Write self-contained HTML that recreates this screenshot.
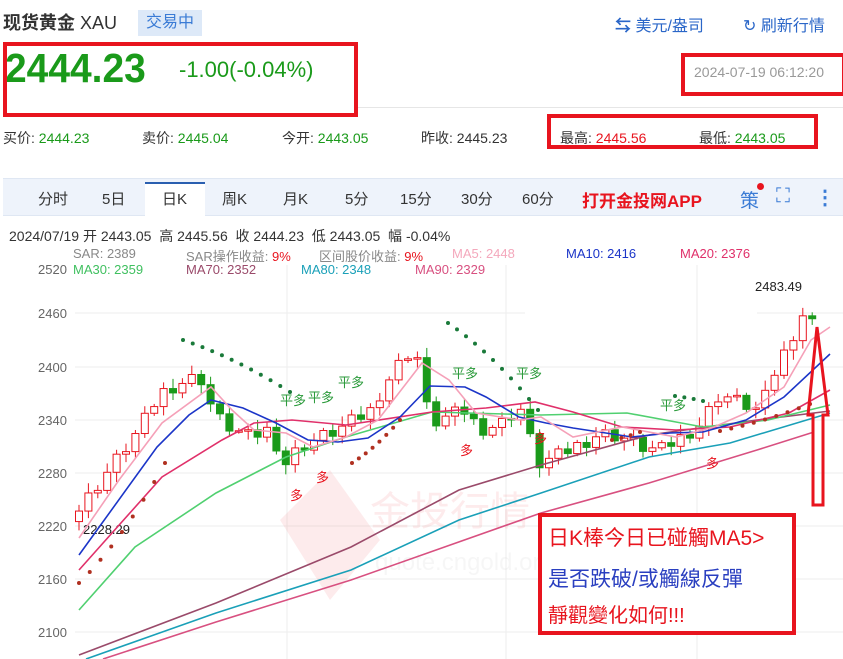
<!DOCTYPE html>
<html><head><meta charset="utf-8"><style>
*{margin:0;padding:0;box-sizing:border-box}
body{width:843px;height:659px;overflow:hidden;background:#fff;font-family:"Liberation Sans","Noto Sans CJK SC",sans-serif;position:relative;color:#333}
.a{position:absolute;white-space:nowrap}
.g{color:#1a9a1a}.r{color:#e8141e}
.box{position:absolute;border:4px solid #e8141e}
</style></head><body>
<div class="a" style="left:3px;top:9px;font-size:18px;font-weight:bold;color:#333">现货黄金 <span style="font-weight:normal">XAU</span></div>
<div class="a" style="left:138px;top:10px;width:64px;height:26px;background:#dde9f8;color:#3a7bd5;font-size:16px;text-align:center;line-height:26px">交易中</div>
<div class="a" style="left:615px;top:12px;font-size:16px;color:#2a66c8"><b>⇆</b> 美元/盎司</div>
<div class="a" style="left:743px;top:12px;font-size:16px;color:#2a66c8">↻ 刷新行情</div>
<div class="a g" style="left:5px;top:45px;font-size:41px;font-weight:bold;transform:scaleX(0.95);transform-origin:left">2444.23</div>
<div class="a g" style="left:179px;top:57px;font-size:22px">-1.00(-0.04%)</div>
<div class="a" style="left:694px;top:64px;font-size:14px;color:#999">2024-07-19 06:12:20</div>
<div class="a" style="left:357px;top:107px;width:486px;height:1px;background:#e6e6e6"></div>
<div class="a" style="left:3px;top:128px;font-size:14px">买价: <span class="g">2444.23</span></div>
<div class="a" style="left:142px;top:128px;font-size:14px">卖价: <span class="g">2445.04</span></div>
<div class="a" style="left:282px;top:128px;font-size:14px">今开: <span class="g">2443.05</span></div>
<div class="a" style="left:421px;top:128px;font-size:14px">昨收: 2445.23</div>
<div class="a" style="left:560px;top:128px;font-size:14px">最高: <span class="r">2445.56</span></div>
<div class="a" style="left:699px;top:128px;font-size:14px">最低: <span class="g">2443.05</span></div>
<div class="a" style="left:3px;top:178px;width:840px;height:38px;background:#eef3fb;border-top:1px solid #dfe7f3;border-bottom:1px solid #dfe7f3"></div>
<div class="a" style="left:145px;top:182px;width:60px;height:34px;background:#fff;border-top:2px solid #2a5fb0"></div>
<div class="a" style="left:0;top:188px;font-size:15px;color:#333;width:843px">
<span class="a" style="left:38px">分时</span><span class="a" style="left:102px">5日</span><span class="a" style="left:162px">日K</span><span class="a" style="left:222px">周K</span><span class="a" style="left:283px">月K</span><span class="a" style="left:345px">5分</span><span class="a" style="left:400px">15分</span><span class="a" style="left:461px">30分</span><span class="a" style="left:522px">60分</span>
<span class="a" style="left:582px;top:-1px;color:#e8141e;font-weight:bold;font-size:17px">打开金投网APP</span>
<span class="a" style="left:740px;top:-2px;color:#3a7bd5;font-size:19px">策</span>
<span class="a" style="left:776px;top:-3px;color:#3a7bd5;font-size:20px">⛶</span>
<span class="a" style="left:815px;top:-3px;color:#3a7bd5;font-size:20px;font-weight:bold">⋮</span></div>
<div class="a" style="left:757px;top:183px;width:7px;height:7px;border-radius:50%;background:#e8141e"></div>
<div class="a" style="left:9px;top:226px;font-size:14px;color:#333">2024/07/19 开 2443.05 &nbsp;高 2445.56 &nbsp;收 2444.23 &nbsp;低 2443.05 &nbsp;幅 -0.04%</div>
<div class="a" style="top:246px;left:0;font-size:13px;width:843px;color:#888">
<span class="a" style="left:73px">SAR: 2389</span><span class="a" style="left:186px">SAR操作收益: <span class="r">9%</span></span><span class="a" style="left:319px">区间股价收益: <span class="r">9%</span></span><span class="a" style="left:452px;color:#f4a8bc">MA5: 2448</span><span class="a" style="left:566px;color:#1b35c8">MA10: 2416</span><span class="a" style="left:680px;color:#e0306a">MA20: 2376</span></div>
<div class="a" style="top:262px;left:0;font-size:13px;width:843px">
<span class="a" style="left:38px;color:#666">2520</span><span class="a" style="left:73px;color:#40c060">MA30: 2359</span><span class="a" style="left:186px;color:#9a4a6a">MA70: 2352</span><span class="a" style="left:301px;color:#1aa0b8">MA80: 2348</span><span class="a" style="left:415px;color:#d85080">MA90: 2329</span></div>
<svg class="a" style="left:0;top:0" width="843" height="659" id="ch">
<g stroke="#eeeeee" stroke-width="1">
<line x1="75" y1="313" x2="525" y2="313"/><line x1="757" y1="313" x2="843" y2="313"/><line x1="75" y1="367" x2="843" y2="367"/><line x1="75" y1="420" x2="843" y2="420"/><line x1="75" y1="473" x2="843" y2="473"/><line x1="75" y1="526" x2="843" y2="526"/><line x1="75" y1="579" x2="843" y2="579"/><line x1="75" y1="632" x2="843" y2="632"/>
<line x1="287" y1="265" x2="287" y2="659"/><line x1="506" y1="265" x2="506" y2="659"/><line x1="697" y1="265" x2="697" y2="659"/></g>
<g font-size="13" fill="#666" font-family="Liberation Sans"><text x="38" y="318">2460</text><text x="38" y="372">2400</text><text x="38" y="425">2340</text><text x="38" y="478">2280</text><text x="38" y="531">2220</text><text x="38" y="584">2160</text><text x="38" y="637">2100</text>
<text x="83" y="534" fill="#222">2228.29</text><text x="755" y="291" fill="#222">2483.49</text></g>
<g opacity="0.08" fill="#e8141e"><polygon points="280,520 330,470 380,540 330,600"/><text x="370" y="525" font-size="40" font-family="Noto Sans CJK SC">金投行情</text><text x="375" y="570" font-size="24" fill="#999">quote.cngold.org</text></g>
<g id="cd"></g>
<g fill="none" stroke-width="1.6">
<polyline stroke="#9a4a6a" points="79,655 216,603 351,547 459,490 541,465 649,435 757,420 830,411"/>
<polyline stroke="#1aa0b8" points="86,659 216,613 351,570 459,520 541,493 649,457 730,443 830,413"/>
<polyline stroke="#d85080" points="103,659 216,622 351,580 541,513 649,483 757,450 814,432"/>
<polyline stroke="#50d070" points="79,610 135,547 216,493 286,457 346,437 432,412 541,415 627,413 703,427 768,420 830,405"/>
<polyline stroke="#e0306a" points="79,570 162,477 222,440 254,423 292,420 346,425 432,412 486,408 535,402 573,412 622,427 676,430 730,427 789,413 830,390"/>
<polyline stroke="#1b35c8" points="79,555 157,447 189,415 211,400 243,408 276,423 308,440 338,442 368,438 400,417 430,386 465,387 486,397 519,417 546,423 573,428 632,437 670,433 703,432 746,420 784,397 830,354"/>
<polyline stroke="#f5a0b8" points="79,538 119,480 162,423 211,387 232,410 254,430 286,433 313,447 346,437 378,420 422,363 449,380 476,413 519,420 541,417 573,437 622,427 676,437 714,427 746,413 784,387 811,340 830,327"/>
</g>
<g id="dots"></g>
<g font-size="13" font-family="Noto Sans CJK SC" fill="#2a9a3a"><text x="280" y="405">平多</text><text x="308" y="402">平多</text><text x="338" y="387">平多</text><text x="452" y="378">平多</text><text x="516" y="378">平多</text><text x="660" y="410">平多</text></g>
<g font-size="13" font-family="Noto Sans CJK SC" fill="#e8141e"><text x="290" y="500">多</text><text x="316" y="482">多</text><text x="460" y="455">多</text><text x="706" y="468">多</text><text x="534" y="443">多</text></g>
<path d="M817,327 L828,415 L823,415 L823,505 L813,505 L813,415 L808,415 Z" fill="none" stroke="#e8141e" stroke-width="3"/>
</svg>
<div class="box" style="left:3px;top:42px;width:355px;height:75px"></div>
<div class="box" style="left:681px;top:53px;width:165px;height:43px"></div>
<div class="box" style="left:547px;top:114px;width:271px;height:35px"></div>
<div class="box" style="left:538px;top:513px;width:258px;height:122px;background:#fff"></div>
<div class="a" style="left:548px;top:522px;font-size:21px;color:#e8141e">日K棒今日已碰觸MA5&gt;</div>
<div class="a" style="left:548px;top:563px;font-size:21px;color:#2a3fc0">是否跌破/或觸線反彈</div>
<div class="a" style="left:548px;top:599px;font-size:20px;color:#e8141e">靜觀變化如何!!!</div>
<script>
var K=[[80,2240],[100,2270],[120,2300],[140,2330],[160,2370],[175,2380],[200,2390],[215,2345],[232,2330],[250,2320],[270,2330],[285,2290],[300,2310],[320,2320],[340,2330],[355,2340],[370,2350],[385,2380],[400,2405],[415,2425],[430,2335],[450,2345],[465,2350],[480,2330],[500,2335],[520,2355],[538,2290],[560,2300],[575,2310],[600,2325],[620,2322],[640,2310],[660,2305],[680,2320],[700,2335],[720,2370],[740,2360],[760,2350],[775,2395],[790,2430],[803,2460],[812,2450],[820,2444]];
function P(x){for(var i=1;i<K.length;i++)if(x<=K[i][0]){var a=K[i-1],b=K[i];return a[1]+(b[1]-a[1])*(x-a[0])/(b[0]-a[0]);}return 2444;}
function Y(p){return 420-(p-2340)*0.8833;}
var s='',prev=P(70),n=0;
for(var x=79;x<=820;x+=9.4){n++;var c=P(x)+((n*37)%11-5)*1.6;var o=prev;var up=c>=o;var hi=Math.max(o,c)+3+(n*13)%9,lo=Math.min(o,c)-3-(n*7)%9;
var col=up?'#e8141e':'#1a9a1a';var y1=Y(Math.max(o,c)),y2=Y(Math.min(o,c));if(y2-y1<1.5)y2=y1+1.5;
s+='<line x1="'+x+'" x2="'+x+'" y1="'+Y(hi)+'" y2="'+Y(lo)+'" stroke="'+col+'"/>';
s+='<rect x="'+(x-3.5)+'" y="'+y1+'" width="7" height="'+(y2-y1)+'" fill="'+(up?'#fff':col)+'" stroke="'+col+'"/>';prev=c;}
document.getElementById('cd').innerHTML=s;
var d='';function dot(x1,y1,x2,y2,k,c){for(var i=0;i<k;i++){var t=k>1?i/(k-1):0;d+='<circle cx="'+(x1+(x2-x1)*t)+'" cy="'+(y1+(y2-y1)*t*t*0.3+(y2-y1)*t*0.7)+'" r="2" fill="'+c+'"/>';}}
dot(79,583,165,463,9,'#b03020');dot(183,340,290,392,12,'#1a7a3a');dot(352,463,400,420,8,'#b03020');dot(448,323,538,410,11,'#1a7a3a');dot(612,440,640,432,4,'#b03020');dot(675,396,703,401,4,'#1a7a3a');dot(720,431,810,404,9,'#b03020');
document.getElementById('dots').innerHTML=d;
</script>
</body></html>
